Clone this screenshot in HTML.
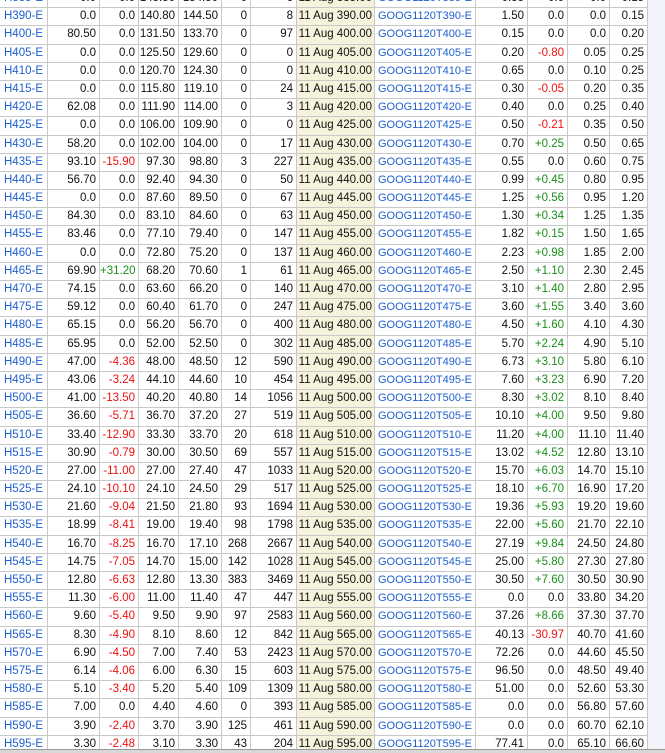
<!DOCTYPE html>
<html><head><meta charset="utf-8"><style>
html,body{margin:0;padding:0;width:665px;height:753px;overflow:hidden;background:#fff;}
body{font-family:"Liberation Sans",Arial,sans-serif;font-size:11.5px;color:#111;position:relative;}
#rt{position:absolute;left:648px;top:0;width:17px;height:753px;background:#f3f5fa;}
#t{position:absolute;left:0;top:-10px;width:648px;}
.r{height:18.2px;box-sizing:border-box;border-bottom:1px solid #c8c8c8;display:flex;line-height:17.2px;white-space:nowrap;}
.r span{display:block;box-sizing:border-box;border-right:1px solid #c8c8c8;text-align:right;padding-right:3px;overflow:hidden;height:100%;}
.r span:nth-child(1){width:48px;text-align:left;padding-left:4px;color:#1f5fcf;}
.r span:nth-child(2){width:52px}
.r span:nth-child(3){width:39px}
.r span:nth-child(4){width:40px}
.r span:nth-child(5){width:43px}
.r span:nth-child(6){width:29px}
.r span:nth-child(7){width:46px}
.r span:nth-child(8){width:78px;background:#f5f3dc;padding-right:2px}
.r span:nth-child(9){width:101px;text-align:left;padding-left:3px;color:#1f5fcf;font-size:11px}
.r span:nth-child(10){width:52px}
.r span:nth-child(11){width:40px}
.r span:nth-child(12){width:42px}
.r span:nth-child(13){width:38px}
.r span.n{color:#ee1111}.r span.p{color:#1a8f1a}
#bot{position:absolute;left:0;top:749px;width:665px;height:4px;background:#d8d8d8;border-top:1px solid #999;}
</style></head><body>
<div id="rt"></div>
<div id="t">
<div class="r"><span>H385-E</span><span>0.0</span><span>0.0</span><span>145.50</span><span>154.50</span><span>0</span><span>6</span><span>11 Aug 385.00</span><span>GOOG1120T385-E</span><span>0.55</span><span>0.0</span><span>0.0</span><span>0.15</span></div>
<div class="r"><span>H390-E</span><span>0.0</span><span>0.0</span><span>140.80</span><span>144.50</span><span>0</span><span>8</span><span>11 Aug 390.00</span><span>GOOG1120T390-E</span><span>1.50</span><span>0.0</span><span>0.0</span><span>0.15</span></div>
<div class="r"><span>H400-E</span><span>80.50</span><span>0.0</span><span>131.50</span><span>133.70</span><span>0</span><span>97</span><span>11 Aug 400.00</span><span>GOOG1120T400-E</span><span>0.15</span><span>0.0</span><span>0.0</span><span>0.20</span></div>
<div class="r"><span>H405-E</span><span>0.0</span><span>0.0</span><span>125.50</span><span>129.60</span><span>0</span><span>0</span><span>11 Aug 405.00</span><span>GOOG1120T405-E</span><span>0.20</span><span class="n">-0.80</span><span>0.05</span><span>0.25</span></div>
<div class="r"><span>H410-E</span><span>0.0</span><span>0.0</span><span>120.70</span><span>124.30</span><span>0</span><span>0</span><span>11 Aug 410.00</span><span>GOOG1120T410-E</span><span>0.65</span><span>0.0</span><span>0.10</span><span>0.25</span></div>
<div class="r"><span>H415-E</span><span>0.0</span><span>0.0</span><span>115.80</span><span>119.10</span><span>0</span><span>24</span><span>11 Aug 415.00</span><span>GOOG1120T415-E</span><span>0.30</span><span class="n">-0.05</span><span>0.20</span><span>0.35</span></div>
<div class="r"><span>H420-E</span><span>62.08</span><span>0.0</span><span>111.90</span><span>114.00</span><span>0</span><span>3</span><span>11 Aug 420.00</span><span>GOOG1120T420-E</span><span>0.40</span><span>0.0</span><span>0.25</span><span>0.40</span></div>
<div class="r"><span>H425-E</span><span>0.0</span><span>0.0</span><span>106.00</span><span>109.90</span><span>0</span><span>0</span><span>11 Aug 425.00</span><span>GOOG1120T425-E</span><span>0.50</span><span class="n">-0.21</span><span>0.35</span><span>0.50</span></div>
<div class="r"><span>H430-E</span><span>58.20</span><span>0.0</span><span>102.00</span><span>104.00</span><span>0</span><span>17</span><span>11 Aug 430.00</span><span>GOOG1120T430-E</span><span>0.70</span><span class="p">+0.25</span><span>0.50</span><span>0.65</span></div>
<div class="r"><span>H435-E</span><span>93.10</span><span class="n">-15.90</span><span>97.30</span><span>98.80</span><span>3</span><span>227</span><span>11 Aug 435.00</span><span>GOOG1120T435-E</span><span>0.55</span><span>0.0</span><span>0.60</span><span>0.75</span></div>
<div class="r"><span>H440-E</span><span>56.70</span><span>0.0</span><span>92.40</span><span>94.30</span><span>0</span><span>50</span><span>11 Aug 440.00</span><span>GOOG1120T440-E</span><span>0.99</span><span class="p">+0.45</span><span>0.80</span><span>0.95</span></div>
<div class="r"><span>H445-E</span><span>0.0</span><span>0.0</span><span>87.60</span><span>89.50</span><span>0</span><span>67</span><span>11 Aug 445.00</span><span>GOOG1120T445-E</span><span>1.25</span><span class="p">+0.56</span><span>0.95</span><span>1.20</span></div>
<div class="r"><span>H450-E</span><span>84.30</span><span>0.0</span><span>83.10</span><span>84.60</span><span>0</span><span>63</span><span>11 Aug 450.00</span><span>GOOG1120T450-E</span><span>1.30</span><span class="p">+0.34</span><span>1.25</span><span>1.35</span></div>
<div class="r"><span>H455-E</span><span>83.46</span><span>0.0</span><span>77.10</span><span>79.40</span><span>0</span><span>147</span><span>11 Aug 455.00</span><span>GOOG1120T455-E</span><span>1.82</span><span class="p">+0.15</span><span>1.50</span><span>1.65</span></div>
<div class="r"><span>H460-E</span><span>0.0</span><span>0.0</span><span>72.80</span><span>75.20</span><span>0</span><span>137</span><span>11 Aug 460.00</span><span>GOOG1120T460-E</span><span>2.23</span><span class="p">+0.98</span><span>1.85</span><span>2.00</span></div>
<div class="r"><span>H465-E</span><span>69.90</span><span class="p">+31.20</span><span>68.20</span><span>70.60</span><span>1</span><span>61</span><span>11 Aug 465.00</span><span>GOOG1120T465-E</span><span>2.50</span><span class="p">+1.10</span><span>2.30</span><span>2.45</span></div>
<div class="r"><span>H470-E</span><span>74.15</span><span>0.0</span><span>63.60</span><span>66.20</span><span>0</span><span>140</span><span>11 Aug 470.00</span><span>GOOG1120T470-E</span><span>3.10</span><span class="p">+1.40</span><span>2.80</span><span>2.95</span></div>
<div class="r"><span>H475-E</span><span>59.12</span><span>0.0</span><span>60.40</span><span>61.70</span><span>0</span><span>247</span><span>11 Aug 475.00</span><span>GOOG1120T475-E</span><span>3.60</span><span class="p">+1.55</span><span>3.40</span><span>3.60</span></div>
<div class="r"><span>H480-E</span><span>65.15</span><span>0.0</span><span>56.20</span><span>56.70</span><span>0</span><span>400</span><span>11 Aug 480.00</span><span>GOOG1120T480-E</span><span>4.50</span><span class="p">+1.60</span><span>4.10</span><span>4.30</span></div>
<div class="r"><span>H485-E</span><span>65.95</span><span>0.0</span><span>52.00</span><span>52.50</span><span>0</span><span>302</span><span>11 Aug 485.00</span><span>GOOG1120T485-E</span><span>5.70</span><span class="p">+2.24</span><span>4.90</span><span>5.10</span></div>
<div class="r"><span>H490-E</span><span>47.00</span><span class="n">-4.36</span><span>48.00</span><span>48.50</span><span>12</span><span>590</span><span>11 Aug 490.00</span><span>GOOG1120T490-E</span><span>6.73</span><span class="p">+3.10</span><span>5.80</span><span>6.10</span></div>
<div class="r"><span>H495-E</span><span>43.06</span><span class="n">-3.24</span><span>44.10</span><span>44.60</span><span>10</span><span>454</span><span>11 Aug 495.00</span><span>GOOG1120T495-E</span><span>7.60</span><span class="p">+3.23</span><span>6.90</span><span>7.20</span></div>
<div class="r"><span>H500-E</span><span>41.00</span><span class="n">-13.50</span><span>40.20</span><span>40.80</span><span>14</span><span>1056</span><span>11 Aug 500.00</span><span>GOOG1120T500-E</span><span>8.30</span><span class="p">+3.02</span><span>8.10</span><span>8.40</span></div>
<div class="r"><span>H505-E</span><span>36.60</span><span class="n">-5.71</span><span>36.70</span><span>37.20</span><span>27</span><span>519</span><span>11 Aug 505.00</span><span>GOOG1120T505-E</span><span>10.10</span><span class="p">+4.00</span><span>9.50</span><span>9.80</span></div>
<div class="r"><span>H510-E</span><span>33.40</span><span class="n">-12.90</span><span>33.30</span><span>33.70</span><span>20</span><span>618</span><span>11 Aug 510.00</span><span>GOOG1120T510-E</span><span>11.20</span><span class="p">+4.00</span><span>11.10</span><span>11.40</span></div>
<div class="r"><span>H515-E</span><span>30.90</span><span class="n">-0.79</span><span>30.00</span><span>30.50</span><span>69</span><span>557</span><span>11 Aug 515.00</span><span>GOOG1120T515-E</span><span>13.02</span><span class="p">+4.52</span><span>12.80</span><span>13.10</span></div>
<div class="r"><span>H520-E</span><span>27.00</span><span class="n">-11.00</span><span>27.00</span><span>27.40</span><span>47</span><span>1033</span><span>11 Aug 520.00</span><span>GOOG1120T520-E</span><span>15.70</span><span class="p">+6.03</span><span>14.70</span><span>15.10</span></div>
<div class="r"><span>H525-E</span><span>24.10</span><span class="n">-10.10</span><span>24.10</span><span>24.50</span><span>29</span><span>517</span><span>11 Aug 525.00</span><span>GOOG1120T525-E</span><span>18.10</span><span class="p">+6.70</span><span>16.90</span><span>17.20</span></div>
<div class="r"><span>H530-E</span><span>21.60</span><span class="n">-9.04</span><span>21.50</span><span>21.80</span><span>93</span><span>1694</span><span>11 Aug 530.00</span><span>GOOG1120T530-E</span><span>19.36</span><span class="p">+5.93</span><span>19.20</span><span>19.60</span></div>
<div class="r"><span>H535-E</span><span>18.99</span><span class="n">-8.41</span><span>19.00</span><span>19.40</span><span>98</span><span>1798</span><span>11 Aug 535.00</span><span>GOOG1120T535-E</span><span>22.00</span><span class="p">+5.60</span><span>21.70</span><span>22.10</span></div>
<div class="r"><span>H540-E</span><span>16.70</span><span class="n">-8.25</span><span>16.70</span><span>17.10</span><span>268</span><span>2667</span><span>11 Aug 540.00</span><span>GOOG1120T540-E</span><span>27.19</span><span class="p">+9.84</span><span>24.50</span><span>24.80</span></div>
<div class="r"><span>H545-E</span><span>14.75</span><span class="n">-7.05</span><span>14.70</span><span>15.00</span><span>142</span><span>1028</span><span>11 Aug 545.00</span><span>GOOG1120T545-E</span><span>25.00</span><span class="p">+5.80</span><span>27.30</span><span>27.80</span></div>
<div class="r"><span>H550-E</span><span>12.80</span><span class="n">-6.63</span><span>12.80</span><span>13.30</span><span>383</span><span>3469</span><span>11 Aug 550.00</span><span>GOOG1120T550-E</span><span>30.50</span><span class="p">+7.60</span><span>30.50</span><span>30.90</span></div>
<div class="r"><span>H555-E</span><span>11.30</span><span class="n">-6.00</span><span>11.00</span><span>11.40</span><span>47</span><span>447</span><span>11 Aug 555.00</span><span>GOOG1120T555-E</span><span>0.0</span><span>0.0</span><span>33.80</span><span>34.20</span></div>
<div class="r"><span>H560-E</span><span>9.60</span><span class="n">-5.40</span><span>9.50</span><span>9.90</span><span>97</span><span>2583</span><span>11 Aug 560.00</span><span>GOOG1120T560-E</span><span>37.26</span><span class="p">+8.66</span><span>37.30</span><span>37.70</span></div>
<div class="r"><span>H565-E</span><span>8.30</span><span class="n">-4.90</span><span>8.10</span><span>8.60</span><span>12</span><span>842</span><span>11 Aug 565.00</span><span>GOOG1120T565-E</span><span>40.13</span><span class="n">-30.97</span><span>40.70</span><span>41.60</span></div>
<div class="r"><span>H570-E</span><span>6.90</span><span class="n">-4.50</span><span>7.00</span><span>7.40</span><span>53</span><span>2423</span><span>11 Aug 570.00</span><span>GOOG1120T570-E</span><span>72.26</span><span>0.0</span><span>44.60</span><span>45.50</span></div>
<div class="r"><span>H575-E</span><span>6.14</span><span class="n">-4.06</span><span>6.00</span><span>6.30</span><span>15</span><span>603</span><span>11 Aug 575.00</span><span>GOOG1120T575-E</span><span>96.50</span><span>0.0</span><span>48.50</span><span>49.40</span></div>
<div class="r"><span>H580-E</span><span>5.10</span><span class="n">-3.40</span><span>5.20</span><span>5.40</span><span>109</span><span>1309</span><span>11 Aug 580.00</span><span>GOOG1120T580-E</span><span>51.00</span><span>0.0</span><span>52.60</span><span>53.30</span></div>
<div class="r"><span>H585-E</span><span>7.00</span><span>0.0</span><span>4.40</span><span>4.60</span><span>0</span><span>393</span><span>11 Aug 585.00</span><span>GOOG1120T585-E</span><span>0.0</span><span>0.0</span><span>56.80</span><span>57.60</span></div>
<div class="r"><span>H590-E</span><span>3.90</span><span class="n">-2.40</span><span>3.70</span><span>3.90</span><span>125</span><span>461</span><span>11 Aug 590.00</span><span>GOOG1120T590-E</span><span>0.0</span><span>0.0</span><span>60.70</span><span>62.10</span></div>
<div class="r"><span>H595-E</span><span>3.30</span><span class="n">-2.48</span><span>3.10</span><span>3.30</span><span>43</span><span>204</span><span>11 Aug 595.00</span><span>GOOG1120T595-E</span><span>77.41</span><span>0.0</span><span>65.10</span><span>66.60</span></div>
</div>
<div id="bot"></div>
</body></html>
